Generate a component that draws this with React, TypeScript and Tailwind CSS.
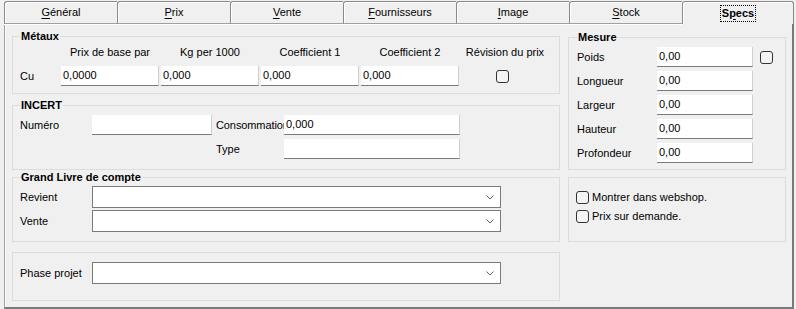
import React from "react";

const tabs = [
  { first: "G", rest: "énéral" },
  { first: "P", rest: "rix" },
  { first: "V", rest: "ente" },
  { first: "F", rest: "ournisseurs" },
  { first: "I", rest: "mage" },
  { first: "S", rest: "tock" },
];

function TextBox({ w, value }: { w: string; value?: string }) {
  return (
    <div
      className={`h-[20px] bg-white border-r border-b border-r-[#cfcfcf] border-b-[#7a7a7a] flex items-center pl-[2px] text-[11px] leading-[13px] ${w}`}
    >
      {value}
    </div>
  );
}

function CheckBox() {
  return <div className="w-[13px] h-[13px] border border-[#333333] rounded-[3px] bg-[#f4f4f4] shrink-0" />;
}

function Combo() {
  return (
    <div className="h-[22px] w-[409px] bg-white border border-[#7a7a7a] flex items-center justify-end pr-[6px]">
      <svg width="8" height="5" viewBox="0 0 8 5">
        <polyline points="0.5,0.5 4,4 7.5,0.5" fill="none" stroke="#606060" strokeWidth="1" />
      </svg>
    </div>
  );
}

export default function App() {
  return (
    <div className="w-[796px] h-[309px] bg-[#f0f0f0] font-['Liberation_Sans',Arial,sans-serif] text-[11px] leading-[13px] text-black pl-[4px] pr-[2px] overflow-hidden">
      {/* Tab strip */}
      <div className="flex pt-[1px] h-[24px]">
        {tabs.map((t) => (
          <div
            key={t.first}
            className="w-[113px] h-[23px] border-t border-l border-b border-t-[#8a8a8a] border-l-[#8a8a8a] border-b-[#a0a0a0] rounded-tl-[3px] shadow-[inset_1px_1px_0_#ffffff,0_1px_0_#ffffff] flex items-center justify-center pb-[1px]"
          >
            <span>
              <span className="underline underline-offset-[2px]">{t.first}</span>
              {t.rest}
            </span>
          </div>
        ))}
        <div className="w-[112px] h-[23px] border-t border-l border-r border-t-[#8a8a8a] border-l-[#8a8a8a] border-r-[#8a8a8a] rounded-t-[3px] shadow-[inset_1px_1px_0_#ffffff] flex items-center justify-center">
          <span className="border border-dotted border-black px-[1px] py-[1px] font-bold">
            S<span className="underline underline-offset-[2px]">p</span>ecs
          </span>
        </div>
      </div>

      {/* Panel */}
      <div className="h-[285px] border-l border-l-[#a0a0a0] border-r-2 border-b-2 border-r-[#7a7a7a] border-b-[#7a7a7a] shadow-[inset_1px_0_0_#ffffff] flex gap-[8px] pl-[7px]">
        {/* Left column */}
        <div className="w-[548px] flex flex-col">
          {/* Métaux */}
          <fieldset className="mt-[6px] h-[64px] border border-[#dcdcdc] px-[7px]">
            <legend className="px-[1px] font-bold leading-[13px]">Métaux</legend>
            <div className="flex pt-[3px] h-[16px] leading-[13px]">
              <div className="w-[41px]" />
              <div className="w-[98px] text-center">Prix de base par</div>
              <div className="w-[2px]" />
              <div className="w-[98px] text-center">Kg per 1000</div>
              <div className="w-[2px]" />
              <div className="w-[98px] text-center">Coefficient 1</div>
              <div className="w-[2px]" />
              <div className="w-[98px] text-center">Coefficient 2</div>
              <div className="w-[2px]" />
              <div className="w-[88px] text-center whitespace-nowrap">Révision du prix</div>
            </div>
            <div className="flex items-center mt-[7px] gap-[2px]">
              <div className="w-[39px]">Cu</div>
              <TextBox w="w-[98px]" value="0,0000" />
              <TextBox w="w-[98px]" value="0,000" />
              <TextBox w="w-[98px]" value="0,000" />
              <TextBox w="w-[98px]" value="0,000" />
              <div className="w-[82px] flex justify-center">
                <CheckBox />
              </div>
            </div>
          </fieldset>

          {/* INCERT */}
          <fieldset className="mt-[5px] h-[71px] border border-[#dcdcdc] px-[7px]">
            <legend className="px-[1px] font-bold leading-[13px]">INCERT</legend>
            <div className="flex items-center pt-[3px]">
              <div className="w-[72px]">Numéro</div>
              <TextBox w="w-[120px]" />
              <div className="w-[4px]" />
              <div className="w-[68px] overflow-hidden whitespace-nowrap tracking-[-0.1px]">Consommation</div>
              <TextBox w="w-[176px]" value="0,000" />
            </div>
            <div className="flex items-center mt-[4px]">
              <div className="w-[196px]" />
              <div className="w-[68px]">Type</div>
              <TextBox w="w-[176px]" />
            </div>
          </fieldset>

          {/* Grand Livre de compte */}
          <fieldset className="mt-[1px] h-[71px] border border-[#dcdcdc] px-[7px]">
            <legend className="px-[1px] font-bold leading-[13px]">Grand Livre de compte</legend>
            <div className="flex items-center pt-[2px]">
              <div className="w-[72px]">Revient</div>
              <Combo />
            </div>
            <div className="flex items-center mt-[2px]">
              <div className="w-[72px]">Vente</div>
              <Combo />
            </div>
          </fieldset>

          {/* Phase projet */}
          <div className="mt-[10px] h-[49px] border border-[#dcdcdc] px-[7px] pt-[9px]">
            <div className="flex items-center">
              <div className="w-[72px]">Phase projet</div>
              <Combo />
            </div>
          </div>
        </div>

        {/* Right column */}
        <div className="w-[218px] flex flex-col">
          <fieldset className="mt-[7px] h-[139px] border border-[#dcdcdc] pl-[8px] pr-[4px]">
            <legend className="px-[1px] font-bold leading-[13px]">Mesure</legend>
            <div className="flex flex-col gap-[4px] pt-[3px]">
              {["Poids", "Longueur", "Largeur", "Hauteur", "Profondeur"].map((l, i) => (
                <div key={l} className="flex items-center">
                  <div className="w-[80px]">{l}</div>
                  <TextBox w="w-[96px]" value="0,00" />
                  {i === 0 && (
                    <div className="ml-[7px]">
                      <CheckBox />
                    </div>
                  )}
                </div>
              ))}
            </div>
          </fieldset>

          <div className="mt-[7px] h-[65px] border border-[#dcdcdc] pl-[7px] pt-[13px] flex flex-col gap-[6px]">
            <div className="flex items-center gap-[3px]">
              <CheckBox />
              <span>Montrer dans webshop.</span>
            </div>
            <div className="flex items-center gap-[3px]">
              <CheckBox />
              <span>Prix sur demande.</span>
            </div>
          </div>
        </div>
      </div>
    </div>
  );
}
